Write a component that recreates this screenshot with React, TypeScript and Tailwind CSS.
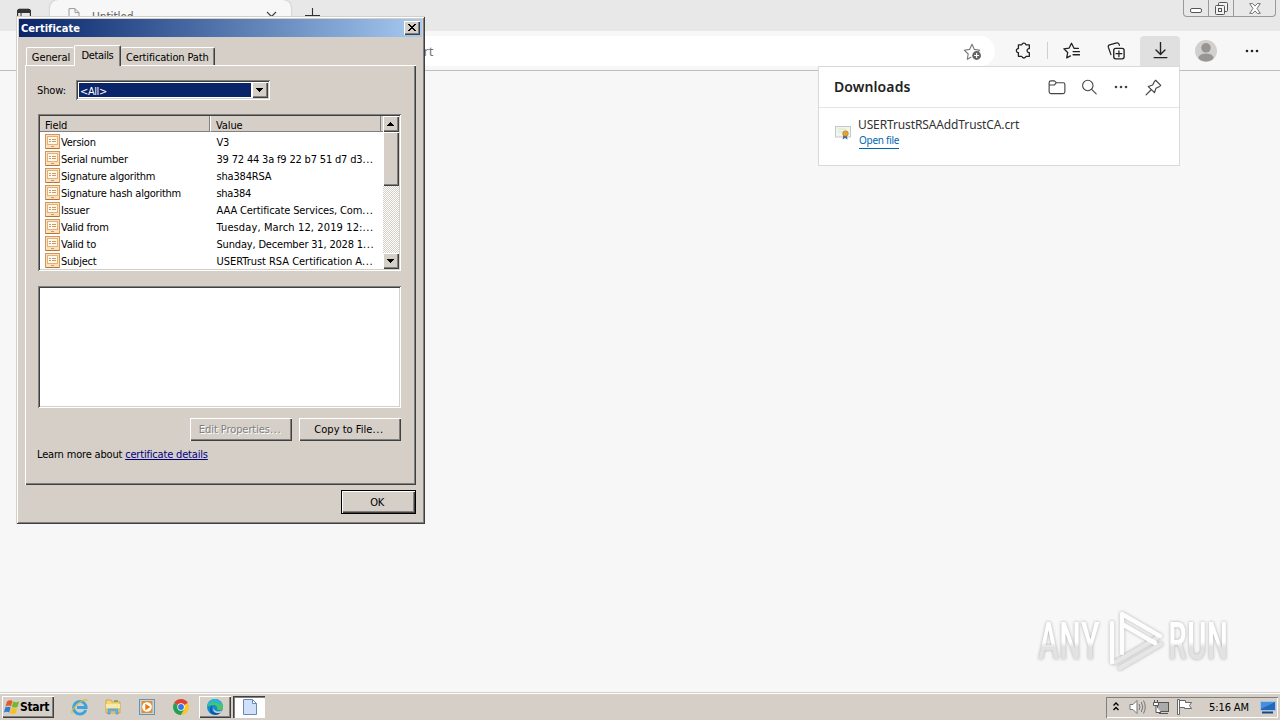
import type { ReactNode } from "react";

const raised =
  "bg-[#d5cfc8] shadow-[inset_1px_1px_0_#fff,inset_-1px_-1px_0_#404040,inset_-2px_-2px_0_#808080]";
const sunken =
  "bg-white shadow-[inset_1px_1px_0_#808080,inset_-1px_-1px_0_#fff,inset_2px_2px_0_#404040,inset_-2px_-2px_0_#d4d0c8]";

const fields = [
  { name: "Version", value: "V3", cut: false, tracking: "tracking-[-0.3px]" },
  { name: "Serial number", value: "39 72 44 3a f9 22 b7 51 d7 d3", cut: true, tracking: "tracking-[-0.18px]" },
  { name: "Signature algorithm", value: "sha384RSA", cut: false, tracking: "tracking-[-0.18px]" },
  { name: "Signature hash algorithm", value: "sha384", cut: false, tracking: "tracking-[-0.3px]" },
  { name: "Issuer", value: "AAA Certificate Services, Com", cut: true, tracking: "tracking-[-0.12px]" },
  { name: "Valid from", value: "Tuesday, March 12, 2019 12:", cut: true, tracking: "tracking-[0.12px]" },
  { name: "Valid to", value: "Sunday, December 31, 2028 1", cut: true, tracking: "tracking-[-0.18px]" },
  { name: "Subject", value: "USERTrust RSA Certification A", cut: true, tracking: "tracking-[-0.03px]" },
];

function Dots() {
  return <span className="tracking-[0.6px]">...</span>;
}

function Icon({ children, className, size = 16 }: { children: ReactNode; className?: string; size?: number }) {
  return (
    <svg
      width={size}
      height={size}
      viewBox="0 0 16 16"
      fill="none"
      stroke="#222"
      strokeWidth="1.1"
      strokeLinecap="round"
      strokeLinejoin="round"
      className={"shrink-0 " + (className ?? "")}
    >
      {children}
    </svg>
  );
}

function FieldIcon() {
  return (
    <svg width="15" height="17" viewBox="0 0 15 17" className="shrink-0" shapeRendering="crispEdges">
      <rect x="0.5" y="1.5" width="14" height="14" fill="#fbe0c0" stroke="#d3965c" />
      <rect x="1" y="15" width="13" height="1" fill="#b87333" />
      <rect x="2.5" y="3.5" width="10" height="8" fill="#fff8ec" stroke="#e3b27c" />
      <path d="M4 6.5h2M7 6.5h4M4 8.5h2M7 8.5h4" stroke="#cf9a62" />
      <path d="M6 13.5h3" stroke="#cf9a62" />
    </svg>
  );
}

function Arrow({ up }: { up?: boolean }) {
  return (
    <svg width="7" height="4" viewBox="0 0 7 4" className="mr-px" shapeRendering="crispEdges">
      <path d={up ? "M3 0h1v1h1v1h1v1h1v1H0V3h1V2h1V1h1z" : "M0 0h7v1H6v1H5v1H4v1H3V3H2V2H1V1H0z"} fill="#000" />
    </svg>
  );
}

function TabStrip() {
  return (
    <div className="flex h-[31px] items-start overflow-hidden bg-[#e8e8e8]">
      <svg width="16" height="16" viewBox="0 0 16 16" className="ml-4 mt-2 shrink-0">
        <rect x="1.6" y="1.6" width="12.8" height="12.8" rx="2" fill="none" stroke="#333" strokeWidth="1.2" />
        <path d="M1.500 4.500V3.200a2 2 0 0 1 2-2h9a2 2 0 0 1 2 2v1.300zM5 5v9" fill="#333" stroke="#333" />
      </svg>
      <div className="ml-[18px] flex h-[32px] w-[241px] items-start rounded-t-lg bg-[#f7f7f7] pl-[17px] pr-[14px] shadow-[0_0_2px_#aaa]">
        <svg width="14" height="16" viewBox="0 0 14 16" className="mt-2" fill="none" stroke="#999">
          <path d="M2 .6h6l4 4v10H2zM8 .6v4h4" />
        </svg>
        <span className="ml-[11px] mt-[9px] text-[12px] leading-[16px] tracking-[-0.15px] text-[#666]">Untitled</span>
        <svg width="11" height="11" viewBox="0 0 11 11" className="ml-auto mt-[11px]" stroke="#444" strokeWidth="1.2">
          <path d="M1 1l9 9M10 1l-9 9" />
        </svg>
      </div>
      <svg width="15" height="15" viewBox="0 0 15 15" className="ml-[14px] mt-2 shrink-0" stroke="#333" strokeWidth="1.1">
        <path d="M7.5 0v15M0 7.5h15" />
      </svg>
      <div className="ml-auto mr-1 flex h-[17px] w-[93px] shrink-0 rounded-b-[4px] border border-t-0 border-[#999]">
        <div className="flex w-[25px] justify-center border-r border-[#999]">
          <svg width="12" height="5" viewBox="0 0 12 5" className="mt-[8px]" fill="#fff" stroke="#555">
            <rect x=".5" y=".5" width="11" height="4" rx="1.5" />
          </svg>
        </div>
        <div className="flex w-[25px] justify-center border-r border-[#999]">
          <svg width="13" height="13" viewBox="0 0 13 13" className="mt-[2px]" fill="#f2f2f2" stroke="#555">
            <rect x="3.5" y=".5" width="9" height="9" rx="1" />
            <rect x=".5" y="3.5" width="9" height="9" rx="1" />
            <rect x="3.5" y="6.5" width="3" height="3" />
          </svg>
        </div>
        <div className="flex grow justify-center">
          <svg width="12" height="11" viewBox="0 0 12 11" className="mt-[3px]" fill="#fff" stroke="#666" strokeWidth=".9">
            <path d="M.7.6h3L6 3.1 8.3.6h3L8 5.5l3.3 4.9h-3L6 7.9l-2.3 2.5h-3L4 5.5z" />
          </svg>
        </div>
      </div>
    </div>
  );
}

function Toolbar() {
  return (
    <div className="flex h-[40px] items-center border-b border-[#bdbdbd] bg-[#f7f7f7]">
      <div className="ml-[110px] flex h-[30px] w-[885px] items-center rounded-full bg-white pr-[13px]">
        <span className="w-[323px] text-right font-['Noto_Sans',sans-serif] text-[13px] leading-4 text-[#777]">crt</span>
        <svg width="19" height="19" viewBox="0 0 19 19" className="ml-auto mt-[1px]" fill="none" stroke="#777" strokeWidth="1.1">
          <path d="M8.3 15l-4 2.2.9-5.2-4-3.8 5.4-.8L9 2.300l2.4 5.100 5.400.8-1.800 1.600" strokeLinejoin="round" />
          <circle cx="13.600" cy="13.500" r="4.400" fill="#666" stroke="none" />
          <path d="M13.600 11v5M11.100 13.500h5" stroke="#fff" />
        </svg>
      </div>
      <Icon size={17} className="ml-[20px]">
        <path d="M5.300 2.700h1.100a2 2 0 0 1 3.900 0h3.200v3.500h-.7a1.900 1.900 0 0 0 0 3.700h.7v3.600h-3.200a2 2 0 0 1-3.900 0H3.200V9.900h-.5a1.900 1.900 0 0 1 0-3.700h.5V2.700z" strokeWidth="1.200" />
      </Icon>
      <div className="ml-[15px] h-[17px] w-px bg-[#d0d0d0]" />
      <Icon size={17} className="ml-[15px]">
        <path d="M14.500 6.100h-4L8 1.200 5.800 5.700l-5 .7 3.600 3.500-.9 5L7 13.100M9.500 9h6M9.500 12h6" strokeWidth="1.200" />
      </Icon>
      <Icon size={18} className="ml-[27px]">
        <rect x="6" y="5.700" width="9.200" height="9.300" rx="1.800" strokeWidth="1.200" />
        <path d="M10.600 7.800v5.200M8 10.400h5.200M3.500 11.200L1.200 4.600q-.4-1.500 1-2L8.700.8q1.400-.3 1.900 1l.4 1.200" strokeWidth="1.100" />
      </Icon>
      <div className="ml-[15px] flex h-[30px] w-[40px] items-center justify-center rounded-t bg-[#e0e0e0]">
        <Icon size={17}>
          <path d="M8 .5v11M3.800 7.500L8 11.700l4.200-4.200M2 14.700h12" strokeWidth="1.300" />
        </Icon>
      </div>
      <svg width="22" height="22" viewBox="0 0 22 22" className="ml-[15px]">
        <circle cx="11" cy="11" r="11" fill="#d2d0ce" />
        <circle cx="11" cy="7.800" r="4.800" fill="#979593" />
        <ellipse cx="11" cy="17.500" rx="7.500" ry="3.900" fill="#979593" />
      </svg>
      <svg width="14" height="4" viewBox="0 0 14 4" className="ml-[28px]" fill="#222">
        <circle cx="2" cy="2" r="1.300" />
        <circle cx="7" cy="2" r="1.300" />
        <circle cx="12" cy="2" r="1.300" />
      </svg>
    </div>
  );
}

function Downloads() {
  return (
    <div className="absolute left-[818px] top-[66px] h-[100px] w-[362px] border border-[#d9d9d9] bg-white">
      <div className="flex h-[41px] items-center border-b border-[#e4e4e4] pl-[15px]">
        <span className="w-[190px] font-['Noto_Sans',sans-serif] text-[14px] font-semibold leading-5 tracking-[0.1px] text-[#222]">Downloads</span>
        <Icon size={18} className="ml-[24px]">
          <path d="M1 4.200q0-1.700 1.700-1.700h3l1.700 1.700h6q1.600 0 1.600 1.600v6.500q0 1.600-1.600 1.600H2.700Q1 13.900 1 12.200zM1 6.200h4.800l1.600-2" strokeWidth="1" stroke="#444" />
        </Icon>
        <Icon size={16} className="ml-[15px]">
          <circle cx="6.800" cy="6.500" r="5.200" stroke="#444" />
          <path d="M10.700 10.400l4.500 4.500" stroke="#444" />
        </Icon>
        <svg width="14" height="4" viewBox="0 0 14 4" className="ml-[17px]" fill="#444">
          <circle cx="2" cy="2" r="1.300" />
          <circle cx="7" cy="2" r="1.300" />
          <circle cx="12" cy="2" r="1.300" />
        </svg>
        <Icon size={17} className="ml-[17px]">
          <path d="M10 1.200l4.800 4.800-1 1-3.500 1.800-1.400 4.100L3.100 7.100l4.100-1.400L9 2.200zM5.800 10.100L1 15" stroke="#444" />
        </Icon>
      </div>
      <div className="flex pl-[16px] pt-[8px]">
        <svg width="16" height="16" viewBox="0 0 16 16" className="mt-[8px] shrink-0">
          <rect x=".5" y="2.500" width="15" height="10.500" fill="#f2f5e9" stroke="#c5c8c8" />
          <path d="M3 5h8M3 8h5" stroke="#d5e8d5" />
          <path d="M8.500 10l-.8 5.500 2.300-1.500 2.500 1.500-.7-5.500z" fill="#3d6ea5" />
          <circle cx="10.500" cy="9.500" r="2.800" fill="#e2a33a" stroke="#b87818" strokeWidth=".6" />
        </svg>
        <div className="ml-[7px] flex flex-col items-start font-['Noto_Sans',sans-serif]">
          <span className="text-[12px] leading-[17px] tracking-[-0.12px] text-[#333]">USERTrustRSAAddTrustCA.crt</span>
          <span className="ml-px border-b border-[#0066b4] text-[10px] leading-[15px] tracking-[-0.28px] text-[#0066b4]">Open file</span>
        </div>
      </div>
    </div>
  );
}

function Certificate() {
  return (
    <div className="absolute left-[16px] top-[16px] flex h-[508px] w-[409px] flex-col bg-[#d5cfc8] p-[3px] shadow-[inset_1px_1px_0_#d4d0c8,inset_-1px_-1px_0_#404040,inset_2px_2px_0_#fff,inset_-2px_-2px_0_#808080]">
      <div className="flex h-[18px] items-center bg-linear-to-r from-[#0a246a] to-[#a6caf0] pl-[2px] pr-[2px]">
        <span className="pt-px font-bold tracking-[0.02px] text-white">Certificate</span>
        <div className={"ml-auto flex h-[14px] w-[16px] items-center justify-center pb-px pr-px " + raised}>
          <svg width="8" height="7" viewBox="0 0 8 7" shapeRendering="crispEdges">
            <path d="M0 0h2v1h1v1h2V1h1V0h2v1H7v1H6v1H5v1h1v1h1v1h1v1H6V6H5V5H3v1H2v1H0V6h1V5h1V4h1V3H2V2H1V1H0z" fill="#000" />
          </svg>
        </div>
      </div>
      <div className="relative z-10 ml-[7px] mt-[8px] flex h-[21px] items-end">
        <div className="mb-[1px] flex h-[18px] w-[48px] items-center justify-center rounded-t-[2px] border-l border-t border-white pl-px pt-[2px] tracking-[-0.1px]">General</div>
        <div className="flex h-[21px] w-[47px] items-center justify-center rounded-t-[2px] border-l border-r border-t border-l-white border-r-[#404040] border-t-white bg-[#d5cfc8] pb-px shadow-[inset_-1px_0_0_#808080]">Details</div>
        <div className="mb-[1px] flex h-[18px] w-[94px] items-center rounded-t-[2px] border-r border-t border-r-[#404040] border-t-white pl-[5px] pt-[2px] tracking-[-0.15px] shadow-[inset_-1px_0_0_#808080]">Certification Path</div>
      </div>
      <div className="-mt-px ml-[6px] h-[420px] w-[391px] shadow-[inset_1px_1px_0_#fff,inset_-1px_-1px_0_#404040,inset_-2px_-2px_0_#808080]">
        <div className="flex items-center pl-[12px] pt-[15px]">
          <span className="w-[39px] pt-px tracking-[-0.1px]">Show:</span>
          <div className={"flex h-[20px] w-[194px] p-[2px] " + sunken}>
            <div className="m-px flex grow items-center bg-[#0a246a] pl-[1px] pt-[3px] tracking-[-0.4px] text-white">&lt;All&gt;</div>
            <div className={"flex w-[16px] items-center justify-center " + raised}><Arrow /></div>
          </div>
        </div>
        <div className={"ml-[13px] mt-[14px] flex h-[157px] w-[363px] overflow-hidden p-[2px] " + sunken}>
          <div className="flex h-[153px] w-[343px] flex-col overflow-hidden">
            <div className="mb-px flex h-[16px] shrink-0 bg-[#d5cfc8] tracking-[-0.1px]">
              <div className="flex w-[170px] items-center border-b border-r border-[#808080] pl-[5px] pt-[4px]">Field</div>
              <div className="flex w-[171px] items-center border-b border-l border-r border-b-[#808080] border-l-white border-r-[#808080] pl-[5px] pt-[4px]">Value</div>
              <div className="grow border-b border-[#808080]" />
            </div>
            {fields.map((f) => (
              <div key={f.name} className="flex h-[17px] shrink-0 items-center pl-[5px]">
                <FieldIcon />
                <span className="ml-[1px] w-[155px] pt-[2px] tracking-[-0.23px]">{f.name}</span>
                <span className={"whitespace-nowrap pl-[0.5px] pt-[2px] " + f.tracking}>
                  {f.value}
                  {f.cut && <Dots />}
                </span>
              </div>
            ))}
          </div>
          <div className="flex w-[16px] flex-col bg-[repeating-conic-gradient(#fff_0_25%,#d4d0c8_0_50%)] bg-[length:2px_2px]">
            <div className={"flex h-[16px] items-center justify-center " + raised}><Arrow up /></div>
            <div className={"h-[54px] " + raised} />
            <div className={"mt-auto flex h-[16px] items-center justify-center " + raised}><Arrow /></div>
          </div>
        </div>
        <div className={"ml-[13px] mt-[15px] h-[122px] w-[363px] " + sunken} />
        <div className="ml-[165px] mt-[10px] flex gap-[7px]">
          <div className={"flex h-[23px] w-[102px] items-center justify-center pr-[2px] tracking-[-0.08px] text-[#808080] [text-shadow:1px_1px_0_#fff] " + raised}>Edit Properties<Dots /></div>
          <div className={"flex h-[23px] w-[102px] items-center justify-center pr-[2px] tracking-[0.02px] " + raised}>Copy to File<Dots /></div>
        </div>
        <div className="ml-[12px] mt-[7px] whitespace-nowrap tracking-[-0.18px]">
          Learn more about <span className="text-[#000080] underline">certificate details</span>
        </div>
      </div>
      <div className="ml-auto mr-[6px] mt-[5px] flex h-[24px] w-[75px] border border-black">
        <div className={"flex grow items-center justify-center pr-[3px] pt-[2px] " + raised}>OK</div>
      </div>
    </div>
  );
}

function Watermark() {
  return (
    <div className="absolute left-[1038px] top-[609px] flex h-[66px] w-[200px] items-center font-['Roboto',sans-serif] text-[52px] leading-none tracking-normal [filter:drop-shadow(0_0_1.500px_#aaa)]">
      <span className="w-[68px]">
        <span className="inline-block origin-left scale-x-[.69] bg-linear-to-b from-white from-50% to-[#e2e2e2] to-60% bg-clip-text font-medium text-transparent">ANY</span>
      </span>
      <svg width="60" height="66" viewBox="0 0 60 66" className="shrink-0" fill="none" stroke="#fdfdfd" strokeLinejoin="round" strokeLinecap="round" strokeWidth="4.500">
        <path d="M14 59L55 35M9 53.500L51 29" stroke="#e6e6e6" />
        <path d="M6 14v39M16 5v39M16 5l38 22M16 15l33 19" />
      </svg>
      <span className="ml-[2px] w-[66px]">
        <span className="inline-block origin-left scale-x-[.67] bg-linear-to-b from-white from-50% to-[#e2e2e2] to-60% bg-clip-text font-medium text-transparent">RUN</span>
      </span>
    </div>
  );
}

function Taskbar() {
  return (
    <div className="flex h-[28px] items-center border-t border-[#d5cfc8] bg-[#d5cfc8] pt-[1px] shadow-[inset_0_1px_0_#fff]">
      <div className={"ml-[2px] flex h-[22px] w-[52px] items-center pl-[2px] " + raised}>
        <svg width="16" height="16" viewBox="0 0 16 16">
          <path d="M3 2.500q3-2 5.500-.5L7 7.200q-2.500-1.300-5.500.3z" fill="#e8562a" />
          <path d="M9.200 2.500q3 1.500 6 0L13.500 8q-3 1.300-5.700-.3z" fill="#76b82a" />
          <path d="M1.200 8.500q3-1.500 5.500-.2L5.200 13.500q-2.700-1.500-5.200 0z" fill="#2e7fd0" />
          <path d="M7.500 8.700q3 1.500 5.700.3l-1.500 5.200q-3 1.300-5.700-.3z" fill="#f9bf1e" />
        </svg>
        <span className="text-[12px] font-bold tracking-[-0.3px]">Start</span>
      </div>
      <svg width="18" height="18" viewBox="0 0 18 18" className="ml-[17px]">
        <path d="M14.800 12A6.300 6.300 0 1 1 15.200 9.500H6" fill="none" stroke="#39a4dd" strokeWidth="2.800" />
        <path d="M1.300 15.500C-1 12 12-1 16.500 2.500" fill="none" stroke="#e5b73c" strokeWidth="1.300" />
      </svg>
      <svg width="18" height="18" viewBox="0 0 18 18" className="ml-[15px]">
        <path d="M2 2h5l1 2h8v11H2z" fill="#f3d67a" stroke="#cfa948" />
        <path d="M2 6h14v4H2z" fill="#fae8a9" />
        <path d="M4 16v-5h10v5h-2v-3H6v3z" fill="#73b9e5" stroke="#4a93c5" strokeWidth=".7" />
        <path d="M10 3h4" stroke="#5fae52" strokeWidth="1.500" />
      </svg>
      <svg width="16" height="16" viewBox="0 0 16 16" className="ml-[17px]">
        <rect x=".5" y=".5" width="15" height="15" fill="#b8d9ef" stroke="#6393b7" />
        <rect x="2.500" y="2" width="11" height="12" fill="#f18b1c" />
        <circle cx="8" cy="8" r="4.800" fill="#fff" />
        <path d="M6.300 4.800v6.400l5-3.200z" fill="#e8760a" />
      </svg>
      <svg width="16" height="16" viewBox="0 0 16 16" className="ml-[18px]">
        <path d="M8 8L1.100 4A8 8 0 0 1 14.900 4z" fill="#df4132" />
        <path d="M8 8L1.100 4A8 8 0 0 0 8 16l3.500-6z" fill="#269f50" />
        <path d="M8 8l6.900-4A8 8 0 0 1 8 16l3.500-6z" fill="#f7c72c" />
        <circle cx="8" cy="8" r="3.700" fill="#fff" />
        <circle cx="8" cy="8" r="2.900" fill="#3678df" />
      </svg>
      <div className={"ml-[10px] flex h-[22px] w-[32px] items-center justify-center " + raised}>
        <svg width="16" height="16" viewBox="0 0 16 16">
          <circle cx="8" cy="8" r="8" fill="#168ad0" />
          <path d="M.2 7A8 8 0 0 1 16 8.500c0 3-4 3.500-6 2 1-3-1-4.500-4-4.500S1 7 .2 8z" fill="#48c56d" />
          <path d="M.2 7A8 8 0 0 1 10 .3C14 2 15 5 13 6 9 2 3 3 .2 7z" fill="#29b6cf" />
          <path d="M5.500 7C2 12 8 15.500 13.500 13.800A8 8 0 0 1 4 14C2 10 3.500 7.500 5.500 7z" fill="#0c4c9c" />
          <path d="M7 8.500C6 12 11 13.500 15 11.500l-1.500 2.200C8 15 5 12 7 8.500z" fill="#d4d0c8" />
        </svg>
      </div>
      <div className="ml-[2px] flex h-[22px] w-[32px] items-center justify-center bg-white pl-px shadow-[inset_1px_1px_0_#404040,inset_2px_2px_0_#808080,inset_-1px_-1px_0_#fff]">
        <svg width="14" height="16" viewBox="0 0 14 16">
          <path d="M.5.5h9l4 4v11H.5z" fill="#cfe1f8" stroke="#6a89b8" />
          <path d="M9.500.5v4h4z" fill="#fff" stroke="#6a89b8" />
        </svg>
      </div>
      <div className="ml-auto mr-[2px] flex h-[21px] w-[172px] items-center pl-[7px] shadow-[inset_1px_1px_0_#808080,inset_-1px_-1px_0_#fff]">
        <svg width="6" height="9" viewBox="0 0 6 9" className="mb-[2px]" fill="none" stroke="#000" strokeWidth="1.400">
          <path d="M.5 3.500L3 1l2.500 2.500M.5 8L3 5.500 5.500 8" />
        </svg>
        <svg width="17" height="16" viewBox="0 0 17 16" className="ml-[10px]" fill="#fff" stroke="#777">
          <path d="M1 5.500h3l4-4v13l-4-4H1z" />
          <path d="M10 5q2 3 0 6M12.300 3q3 5 0 10M14.500 1.500q3.500 6.500 0 13" fill="none" />
        </svg>
        <svg width="17" height="16" viewBox="0 0 17 16" className="ml-[7px]" fill="#fff" stroke="#555">
          <rect x="4.500" y="3.500" width="11" height="9" fill="#aaa" />
          <path d="M6 14.500h9" />
          <path d="M1.500 1v2M4.500 1v2M.5 3.500h5v3h-5zM3 7v6.500h5" />
        </svg>
        <svg width="16" height="16" viewBox="0 0 16 16" className="ml-[7px]" fill="#fff" stroke="#666">
          <path d="M2.500 15.500h-2V.5h2zM2.500 1.500h6v2h6l-2 3 2 3h-7v-1h-5z" />
        </svg>
        <span className="ml-[16px] w-[42px] whitespace-nowrap pt-[2px] tracking-[-0.1px]">5:16 AM</span>
        <svg width="16" height="14" viewBox="0 0 16 14" className="ml-[9px]">
          <rect x=".5" y="1.500" width="15" height="9" fill="#2268bd" stroke="#a4c5e5" />
          <path d="M1 2h14L1 9z" fill="#488fdb" />
          <path d="M2 12.500h11" stroke="#1b477d" strokeWidth="2" />
        </svg>
      </div>
    </div>
  );
}

export default function App() {
  return (
    <div className="relative flex h-[720px] w-[1280px] flex-col overflow-hidden bg-[#f7f7f7] font-['DejaVu_Sans_Condensed','DejaVu_Sans',sans-serif] text-[11px] leading-[14px] tracking-[-0.35px] text-black [font-stretch:condensed]">
      <TabStrip />
      <Toolbar />
      <div className="grow bg-[#f7f7f7]" />
      <Taskbar />
      <Watermark />
      <Downloads />
      <Certificate />
    </div>
  );
}
